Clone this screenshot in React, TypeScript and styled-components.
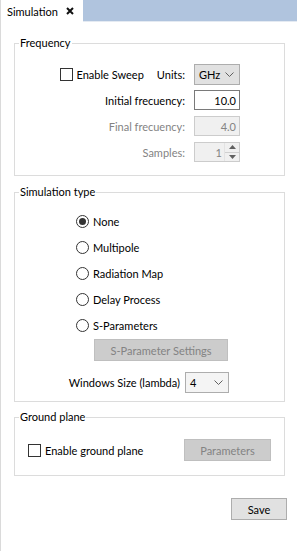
import React from "react";
import styled, { createGlobalStyle } from "styled-components";

const GlobalStyle = createGlobalStyle`
  html, body { margin: 0; padding: 0; background: #fff; }
  body {
    font-family: "Segoe UI", Lato, "Noto Sans", sans-serif;
    font-size: 11px;
    color: #000;
  }
  * { box-sizing: border-box; }
`;

const Page = styled.div`
  width: 297px;
  height: 551px;
  display: flex;
  flex-direction: column;
  overflow: hidden;
  background: #fff;
`;

const TabBar = styled.div`
  display: flex;
  height: 22px;
  flex-shrink: 0;
`;

const Tab = styled.div`
  width: 83px;
  display: flex;
  align-items: center;
  padding-left: 6px;
  gap: 8px;
  background: #fff;
  border-left: 1px solid #dadada;
`;

const TabFill = styled.div`
  flex: 1;
  background: #b0c4de;
  border-bottom: 1px solid #e4eaf2;
`;

const Panel = styled.div`
  flex: 1;
  display: flex;
  flex-direction: column;
  border-left: 1px solid #dadada;
  padding: 13px 12px 0 13px;
`;

const Group = styled.fieldset<{ $mt?: number }>`
  margin: ${(p) => p.$mt ?? 0}px 0 0 0;
  padding: 0;
  min-width: 0;
  border: 1px solid #dcdcdc;
`;

const Legend = styled.legend`
  padding: 0 1px;
  margin-left: 4px;
  line-height: 16px;
`;

const FreqGrid = styled.div`
  display: grid;
  grid-template-columns: 1fr 46px;
  grid-auto-rows: 26px;
  column-gap: 9px;
  align-items: center;
  padding: 10px 44px 10px 0;
`;

const LabelCell = styled.div<{ $disabled?: boolean }>`
  display: flex;
  justify-content: flex-end;
  align-items: center;
  color: ${(p) => (p.$disabled ? "#838383" : "#000")};
  white-space: nowrap;
`;

const CheckLabel = styled.label`
  display: flex;
  align-items: center;
  gap: 4px;
  white-space: nowrap;
`;

const Box = styled.span`
  width: 13px;
  height: 13px;
  border: 1px solid #333;
  background: #fff;
  flex-shrink: 0;
`;

const UnitsText = styled.span`
  margin-left: 13px;
`;

const Combo = styled.div<{ $bg: string; $w: number }>`
  width: ${(p) => p.$w}px;
  height: 21px;
  display: flex;
  align-items: center;
  justify-content: space-between;
  padding: 0 5px 0 4px;
  background: ${(p) => p.$bg};
  border: 1px solid #adadad;
`;

const Field = styled.div<{ $disabled?: boolean }>`
  height: 20px;
  display: flex;
  align-items: center;
  justify-content: flex-end;
  padding-right: 3px;
  background: ${(p) => (p.$disabled ? "#f0f0f0" : "#fff")};
  border: 1px solid ${(p) => (p.$disabled ? "#cccccc" : "#7a7a7a")};
  color: ${(p) => (p.$disabled ? "#838383" : "#000")};
`;

const SpinField = styled.div`
  height: 20px;
  display: flex;
  align-items: stretch;
  background: #f0f0f0;
  border: 1px solid #cccccc;
  color: #838383;
`;

const SpinValue = styled.div`
  flex: 1;
  display: flex;
  align-items: center;
  justify-content: flex-end;
  padding-right: 2px;
`;

const SpinArrows = styled.div`
  width: 15px;
  display: flex;
  flex-direction: column;
  border-left: 1px solid #e3e3e3;
`;

const SpinHalf = styled.div<{ $top?: boolean }>`
  flex: 1;
  display: flex;
  align-items: center;
  justify-content: center;
  border-bottom: ${(p) => (p.$top ? "1px solid #d0d0d0" : "none")};
`;

const TypeBody = styled.div`
  display: flex;
  flex-direction: column;
  padding: 8px 0 8px 0;
`;

const RadioList = styled.div`
  display: flex;
  flex-direction: column;
  padding-left: 61px;
`;

const RadioRow = styled.div`
  height: 26px;
  display: flex;
  align-items: center;
  gap: 4px;
`;

const RadioCircle = styled.span<{ $checked?: boolean }>`
  width: 13px;
  height: 13px;
  border-radius: 50%;
  border: 1px solid #333;
  background: #fff;
  display: flex;
  align-items: center;
  justify-content: center;
  flex-shrink: 0;
  &::after {
    content: "";
    display: ${(p) => (p.$checked ? "block" : "none")};
    width: 7px;
    height: 7px;
    border-radius: 50%;
    background: #333;
  }
`;

const Button = styled.div<{ $disabled?: boolean; $w: number }>`
  width: ${(p) => p.$w}px;
  height: 22px;
  display: flex;
  align-items: center;
  justify-content: center;
  background: ${(p) => (p.$disabled ? "#cccccc" : "#e1e1e1")};
  border: 1px solid ${(p) => (p.$disabled ? "#bfbfbf" : "#adadad")};
  color: ${(p) => (p.$disabled ? "#838383" : "#000")};
  white-space: nowrap;
`;

const SettingsWrap = styled.div`
  margin: 1px 0 0 79px;
`;

const SizeRow = styled.div`
  display: flex;
  justify-content: flex-end;
  align-items: center;
  gap: 5px;
  margin-top: 11px;
  padding-right: 55px;
`;

const GroundRow = styled.div`
  display: flex;
  align-items: center;
  justify-content: space-between;
  padding: 14px 13px 14px 13px;
`;

const Footer = styled.div`
  display: flex;
  justify-content: flex-end;
  margin: 22px -2px 0 0;
`;

const Chevron = () => (
  <svg width="9" height="5" viewBox="0 0 9 5">
    <polyline points="0.5,0.5 4.5,4.5 8.5,0.5" fill="none" stroke="#606060" strokeWidth="1" />
  </svg>
);

const CloseX = () => (
  <svg width="8" height="8" viewBox="0 0 8 8">
    <path d="M1 1 L7 7 M7 1 L1 7" stroke="#111" strokeWidth="2" />
  </svg>
);

const Arrow = ({ up }: { up?: boolean }) => (
  <svg width="7" height="4" viewBox="0 0 7 4">
    <polygon points={up ? "3.5,0 7,4 0,4" : "0,0 7,0 3.5,4"} fill="#606060" />
  </svg>
);

const radios = ["None", "Multipole", "Radiation Map", "Delay Process", "S-Parameters"];

export default function App() {
  return (
    <Page>
      <GlobalStyle />
      <TabBar>
        <Tab>
          <span>Simulation</span>
          <CloseX />
        </Tab>
        <TabFill />
      </TabBar>
      <Panel>
        <Group>
          <Legend>Frequency</Legend>
          <FreqGrid>
            <LabelCell>
              <CheckLabel>
                <Box />
                Enable Sweep
              </CheckLabel>
              <UnitsText>Units:</UnitsText>
            </LabelCell>
            <Combo $bg="#e1e1e1" $w={46}>
              <span>GHz</span>
              <Chevron />
            </Combo>
            <LabelCell>Initial frecuency:</LabelCell>
            <Field>10.0</Field>
            <LabelCell $disabled>Final frecuency:</LabelCell>
            <Field $disabled>4.0</Field>
            <LabelCell $disabled>Samples:</LabelCell>
            <SpinField>
              <SpinValue>1</SpinValue>
              <SpinArrows>
                <SpinHalf $top>
                  <Arrow up />
                </SpinHalf>
                <SpinHalf>
                  <Arrow />
                </SpinHalf>
              </SpinArrows>
            </SpinField>
          </FreqGrid>
        </Group>

        <Group $mt={8}>
          <Legend>Simulation type</Legend>
          <TypeBody>
            <RadioList>
              {radios.map((r, i) => (
                <RadioRow key={r}>
                  <RadioCircle $checked={i === 0} />
                  <span>{r}</span>
                </RadioRow>
              ))}
            </RadioList>
            <SettingsWrap>
              <Button $disabled $w={134}>S-Parameter Settings</Button>
            </SettingsWrap>
            <SizeRow>
              <span>Windows Size (lambda)</span>
              <Combo $bg="#f4f4f4" $w={44}>
                <span>4</span>
                <Chevron />
              </Combo>
            </SizeRow>
          </TypeBody>
        </Group>

        <Group $mt={7}>
          <Legend>Ground plane</Legend>
          <GroundRow>
            <CheckLabel>
              <Box />
              Enable ground plane
            </CheckLabel>
            <Button $disabled $w={87}>Parameters</Button>
          </GroundRow>
        </Group>

        <Footer>
          <Button $w={56}>Save</Button>
        </Footer>
      </Panel>
    </Page>
  );
}
